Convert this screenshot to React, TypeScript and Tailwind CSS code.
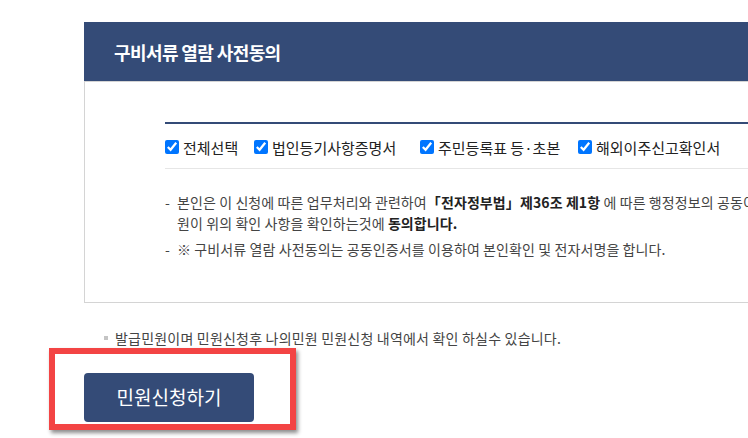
import React from 'react';

const docs = [
    { label: '전체선택', w: 'w-[89px]' },
    { label: '법인등기사항증명서', w: 'w-[166px]' },
    { label: '주민등록표 등·초본', w: 'w-[158px]' },
    { label: '해외이주신고확인서', w: 'w-[170px]' },
];

const font = "font-['Noto_Sans_CJK_KR','Noto_Sans',sans-serif]";

const App: React.FC = () => {
    return (
        <div className={`relative w-[748px] h-[438px] overflow-hidden bg-white ${font}`}>
            <div className="pl-[84px] pt-[22px]">
                {/* header */}
                <div className="w-[800px] h-[59px] bg-[#344b77] flex items-center pl-[30px]">
                    <h3 className="text-[18px] font-bold text-white tracking-[-0.6px] leading-none">구비서류 열람 사전동의</h3>
                </div>

                {/* consent panel */}
                <div className="w-[800px] border-t border-l border-b border-[#d4d4d4] pl-[80px] pt-[40px] pb-[42px]">
                    <div className="border-t-2 border-[#344b77]">
                        <div className="h-[45px] flex items-center border-b border-[#e6e6e6]">
                            {docs.map(d => (
                                <label key={d.label} className={`flex items-center shrink-0 pt-[2px] ${d.w}`}>
                                    <input type="checkbox" defaultChecked className="m-0 w-[14px] h-[14px] accent-[#0075ff]" />
                                    <span className="ml-[4px] text-[15px] text-[#222] leading-none">{d.label}</span>
                                </label>
                            ))}
                        </div>
                    </div>
                    <div className="pt-[23px] text-[14px] leading-[21px] text-[#444] tracking-[0.1px]">
                        <div className="flex whitespace-nowrap">
                            <span className="w-[12px] shrink-0">-</span>
                            <p>
                                본인은 이 신청에 따른 업무처리와 관련하여<b className="text-[#222]">「전자정부법」제36조 제1항</b> 에 따른 행정정보의 공동이용을 통하여 담당공무<br />
                                원이 위의 확인 사항을 확인하는것에 <b className="text-[#222]">동의합니다.</b>
                            </p>
                        </div>
                        <div className="flex whitespace-nowrap mt-[5px]">
                            <span className="w-[12px] shrink-0">-</span>
                            <p>※ 구비서류 열람 사전동의는 공동인증서를 이용하여 본인확인 및 전자서명을 합니다.</p>
                        </div>
                    </div>
                </div>

                {/* notice */}
                <div className="mt-[25px] pl-[20px] flex items-center text-[14px] leading-[20px] text-[#444] tracking-[0.2px]">
                    <span className="w-[4px] h-[4px] bg-[#c4c4c4] mr-[7px] shrink-0"></span>
                    발급민원이며 민원신청후 나의민원 민원신청 내역에서 확인 하실수 있습니다.
                </div>

                <button className="mt-[25px] w-[170px] h-[49px] rounded-[4px] bg-[#344b77] text-white text-[19px]">
                    민원신청하기
                </button>
            </div>

            {/* highlight annotation */}
            <div className="absolute left-[49px] top-[348px] w-[247px] h-[82px] border-[6px] border-[#f34444] shadow-[2px_3px_4px_rgba(0,0,0,0.45)] pointer-events-none"></div>
        </div>
    );
};

export default App;
